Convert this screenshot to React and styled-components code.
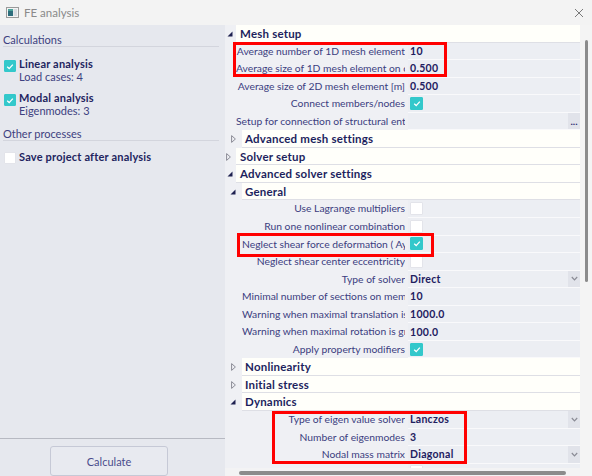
import React from 'react';
import styled, { createGlobalStyle } from 'styled-components';

const GlobalStyle = createGlobalStyle`
  html, body {
    margin: 0;
    padding: 0;
  }
  body {
    font-family: Lato, "Noto Sans", sans-serif;
    background: #f3f3f3;
  }
`;

const Window = styled.div`
  position: relative;
  width: 592px;
  height: 476px;
  display: flex;
  flex-direction: column;
  overflow: hidden;
  background: #f3f3f3;
`;

const TitleBar = styled.div`
  height: 25px;
  flex: none;
  display: flex;
  align-items: center;
  gap: 5px;
  padding: 0 8px 0 6px;
  color: #8a8a8a;
  font-size: 11.5px;
`;

const Title = styled.span`
  flex: 1;
`;

const Body = styled.div`
  flex: 1;
  min-height: 0;
  display: flex;
`;

const LeftPanel = styled.div`
  width: 225px;
  flex: none;
  display: flex;
  flex-direction: column;
  background: #e6e8ee;
  color: #3d3f80;
`;

const SectionTitle = styled.div`
  margin: ${(p) => p.$top}px 6px 0 3px;
  height: 13px;
  line-height: 13px;
  font-size: 11px;
  border-bottom: 1px solid #d3d5dd;
`;

const CalcItem = styled.div`
  display: flex;
  gap: 3px;
  margin-top: ${(p) => p.$top}px;
  padding-left: 4px;
`;

const ItemText = styled.div`
  display: flex;
  flex-direction: column;
  gap: 1px;
`;

const ItemTitle = styled.div`
  font-size: 11px;
  font-weight: 700;
  line-height: 12px;
  color: #22245f;
  letter-spacing: 0.2px;
`;

const ItemSub = styled.div`
  font-size: 11px;
  line-height: 12px;
`;

const Spacer = styled.div`
  flex: 1;
`;

const Footer = styled.div`
  border-top: 1px solid #b7b9c2;
  padding: 7px 0 0 50px;
  height: 30px;
`;

const Button = styled.button`
  width: 118px;
  height: 30px;
  border: 1px solid #c6c9d6;
  border-radius: 3px;
  background: #e8eaf0;
  color: #4a4c8c;
  font-family: inherit;
  font-size: 11px;
  padding: 0;
`;

const Box = styled.span`
  width: ${(p) => p.$size}px;
  height: ${(p) => p.$size}px;
  flex: none;
  margin-top: ${(p) => p.$top || 0}px;
  box-sizing: border-box;
  border-radius: 1px;
  display: flex;
  align-items: center;
  justify-content: center;
  background: ${(p) => (p.$checked ? '#33c8cb' : '#ffffff')};
  border: 1px solid ${(p) => (p.$checked ? '#33c8cb' : '#e3e4ea')};
`;

const RightPanel = styled.div`
  flex: 1;
  display: flex;
  background: #eff0f4;
`;

const GridColumn = styled.div`
  width: 355px;
  flex: none;
  display: flex;
  flex-direction: column;
`;

const Viewport = styled.div`
  flex: 1;
  min-height: 0;
  display: flex;
  flex-direction: column;
  overflow: hidden;
`;

const Row = styled.div`
  height: 17.55px;
  flex: none;
  display: flex;
  box-sizing: border-box;
`;

const Toggle = styled.div`
  width: ${(p) => p.$w}px;
  flex: none;
  display: flex;
  align-items: center;
  justify-content: flex-end;
  padding-right: ${(p) => p.$pr}px;
  box-sizing: border-box;
`;

const GroupHead = styled.div`
  flex: 1;
  background: #fffffa;
  border-bottom: 1px solid #dedfe5;
  padding-left: ${(p) => p.$pl}px;
  font-size: 11.5px;
  font-weight: 700;
  color: #1d1f5e;
  line-height: 17px;
  letter-spacing: 0.2px;
  white-space: nowrap;
`;

const Indent = styled.div`
  width: ${(p) => p.$w}px;
  flex: none;
`;

const Label = styled.div`
  flex: 1;
  min-width: 0;
  margin-right: 3px;
  overflow: hidden;
  white-space: nowrap;
  text-align: right;
  font-size: 10.3px;
  line-height: 17px;
  color: #3b3d7f;
`;

const Value = styled.div`
  width: 172px;
  flex: none;
  display: flex;
  align-items: center;
  padding-left: 2px;
  box-sizing: border-box;
  background: #eceef3;
  border-bottom: 1px solid #f9f9fb;
  font-size: 10.5px;
  font-weight: 700;
  color: #1e2060;
  letter-spacing: 0.3px;
`;

const ValueText = styled.span`
  flex: 1;
`;

const SideButton = styled.span`
  width: 12px;
  align-self: stretch;
  display: flex;
  align-items: center;
  justify-content: center;
  background: #e1e3ea;
  color: #2a2c70;
  font-size: 10px;
  font-weight: 700;
  letter-spacing: 0;
`;

const HTrack = styled.div`
  height: 8px;
  flex: none;
  box-sizing: border-box;
  padding: 3px 0 0 14px;
  background: #f3f3f4;
`;

const HThumb = styled.div`
  width: 327px;
  height: 4px;
  border-radius: 2px;
  background: #8c8c8c;
`;

const ScrollTrack = styled.div`
  flex: 1;
  display: flex;
  justify-content: center;
  background: #f4f4f4;
`;

const Thumb = styled.div`
  width: 3px;
  height: 242px;
  margin: 15px 0 0 1px;
  border-radius: 1.5px;
  background: #8c8c8c;
`;

const Mark = styled.div`
  position: absolute;
  left: ${(p) => p.$x}px;
  top: ${(p) => p.$y}px;
  width: ${(p) => p.$w}px;
  height: ${(p) => p.$h}px;
  box-sizing: border-box;
  border: 3px solid #ff0000;
  pointer-events: none;
`;

const Check = () => (
  <svg width="8" height="7" viewBox="0 0 8 7">
    <polyline points="1.2,3.8 3.2,5.6 6.8,1.6" fill="none" stroke="#fff" strokeWidth="1.3" />
  </svg>
);

const CheckBox = ({ checked, size = 13, top }) => (
  <Box $checked={checked} $size={size} $top={top}>
    {checked && <Check />}
  </Box>
);

const Triangle = ({ open }) =>
  open ? (
    <svg width="6" height="6" viewBox="0 0 6 6">
      <polygon points="5.5,0.5 5.5,5.5 0.5,5.5" fill="#1f2150" />
    </svg>
  ) : (
    <svg width="5" height="8" viewBox="0 0 5 8">
      <polygon points="0.6,0.6 4.4,4 0.6,7.4" fill="none" stroke="#8a8b96" strokeWidth="1" />
    </svg>
  );

const Chevron = () => (
  <svg width="7" height="5" viewBox="0 0 7 5">
    <polyline points="0.8,1 3.5,3.8 6.2,1" fill="none" stroke="#8a8b95" strokeWidth="1.2" />
  </svg>
);

const WindowIcon = () => (
  <svg width="13" height="11" viewBox="0 0 13 11">
    <rect x="0.5" y="0.5" width="12" height="10" fill="#f4f4f4" stroke="#9a9a9a" />
    <rect x="2" y="2" width="5" height="7" fill="#2e6d7c" />
    <rect x="2" y="2" width="5" height="2" fill="#4aa39a" />
    <rect x="7.5" y="2" width="3.5" height="7" fill="#d9dde2" />
  </svg>
);

const CloseIcon = () => (
  <svg width="10" height="10" viewBox="0 0 10 10">
    <path d="M1 1 L9 9 M9 1 L1 9" stroke="#7a7a7a" strokeWidth="1" />
  </svg>
);

const rows = [
  { group: true, level: 0, open: true, label: 'Mesh setup' },
  { level: 1, label: 'Average number of 1D mesh element', value: '10' },
  { level: 1, label: 'Average size of 1D mesh element on curved members [m]', value: '0.500' },
  { level: 1, label: 'Average size of 2D mesh element [m]', value: '0.500' },
  { level: 1, label: 'Connect members/nodes', check: true },
  { level: 1, label: 'Setup for connection of structural entities', dots: true },
  { group: true, level: 1, open: false, label: 'Advanced mesh settings' },
  { group: true, level: 0, open: false, label: 'Solver setup' },
  { group: true, level: 0, open: true, label: 'Advanced solver settings' },
  { group: true, level: 1, open: true, label: 'General' },
  { level: 2, label: 'Use Lagrange multipliers', check: false },
  { level: 2, label: 'Run one nonlinear combination', check: false },
  { level: 2, label: 'Neglect shear force deformation ( Ay, Az >> A )', check: true },
  { level: 2, label: 'Neglect shear center eccentricity', check: false },
  { level: 2, label: 'Type of solver', value: 'Direct', select: true },
  { level: 2, label: 'Minimal number of sections on member', value: '10' },
  { level: 2, label: 'Warning when maximal translation is greater than [mm]', value: '1000.0' },
  { level: 2, label: 'Warning when maximal rotation is greater than [mrad]', value: '100.0' },
  { level: 2, label: 'Apply property modifiers', check: true },
  { group: true, level: 1, open: false, label: 'Nonlinearity' },
  { group: true, level: 1, open: false, label: 'Initial stress' },
  { group: true, level: 1, open: true, label: 'Dynamics' },
  { level: 2, label: 'Type of eigen value solver', value: 'Lanczos', select: true },
  { level: 2, label: 'Number of eigenmodes', value: '3' },
  { level: 2, label: 'Nodal mass matrix', value: 'Diagonal', select: true },
  { level: 2, label: '', check: false },
];

const GridRow = ({ row }) => {
  if (row.group) {
    const w = row.level === 0 ? 11 : 17;
    return (
      <Row>
        <Toggle $w={w} $pr={row.level === 0 ? (row.open ? 3 : 5) : 6}>
          <Triangle open={row.open} />
        </Toggle>
        <GroupHead $pl={row.level === 0 ? 4 : 3}>{row.label}</GroupHead>
      </Row>
    );
  }
  return (
    <Row>
      <Indent $w={row.level === 1 ? 11 : 17} />
      <Label>{row.label}</Label>
      <Value>
        {row.check !== undefined ? (
          <>
            <CheckBox checked={row.check} />
            <ValueText />
          </>
        ) : (
          <ValueText>{row.value}</ValueText>
        )}
        {row.select && (
          <SideButton>
            <Chevron />
          </SideButton>
        )}
        {row.dots && <SideButton>...</SideButton>}
      </Value>
    </Row>
  );
};

export default function App() {
  return (
    <>
      <GlobalStyle />
      <Window>
        <TitleBar>
          <WindowIcon />
          <Title>FE analysis</Title>
          <CloseIcon />
        </TitleBar>
        <Body>
          <LeftPanel>
            <SectionTitle $top={8}>Calculations</SectionTitle>
            <CalcItem $top={11}>
              <CheckBox checked size={12} top={2} />
              <ItemText>
                <ItemTitle>Linear analysis</ItemTitle>
                <ItemSub>Load cases: 4</ItemSub>
              </ItemText>
            </CalcItem>
            <CalcItem $top={9}>
              <CheckBox checked size={12} top={2} />
              <ItemText>
                <ItemTitle>Modal analysis</ItemTitle>
                <ItemSub>Eigenmodes: 3</ItemSub>
              </ItemText>
            </CalcItem>
            <SectionTitle $top={10}>Other processes</SectionTitle>
            <CalcItem $top={10}>
              <CheckBox checked={false} size={12} top={1} />
              <ItemText>
                <ItemTitle>Save project after analysis</ItemTitle>
              </ItemText>
            </CalcItem>
            <Spacer />
            <Footer>
              <Button>Calculate</Button>
            </Footer>
          </LeftPanel>
          <RightPanel>
            <GridColumn>
              <Viewport>
                {rows.map((row, i) => (
                  <GridRow key={i} row={row} />
                ))}
              </Viewport>
              <HTrack>
                <HThumb />
              </HTrack>
            </GridColumn>
            <ScrollTrack>
              <Thumb />
            </ScrollTrack>
          </RightPanel>
        </Body>
        <Mark $x={233} $y={42} $w={214} $h={35} />
        <Mark $x={237} $y={233} $w={197} $h={24} />
        <Mark $x={272} $y={411} $w={195} $h={53} />
      </Window>
    </>
  );
}
